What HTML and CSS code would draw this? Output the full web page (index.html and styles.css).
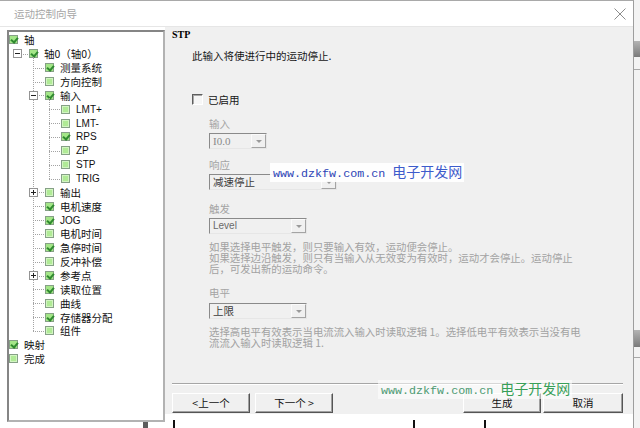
FILE: index.html
```html
<!DOCTYPE html>
<html lang="zh-CN">

<head>
    <meta charset="UTF-8">
    <meta name="viewport" content="width=device-width, initial-scale=1.0">
    <title>运动控制向导</title>
    <link rel="stylesheet" href="styles.css">
</head>

<body>
    <div class="screen">
        <div class="window">
            <div class="titlebar">
                <span class="title">运动控制向导</span>
                <svg class="close" width="12" height="12" viewBox="0 0 12 12">
                    <path d="M0.5 0.5L11.5 11.5M11.5 0.5L0.5 11.5" stroke="#8c8c8c" stroke-width="1" fill="none" />
                </svg>
            </div>

            <div class="main">
                <div class="nav">
                    <div class="tree">
                        <div class="row l0"><i class="cb on"></i><span>轴</span></div>
                        <div class="row l1"><span class="twist"><i class="exp"></i></span><i class="cb on"></i><span>轴0（轴0）</span></div>
                        <div class="group g2">
                            <div class="row l2"><span class="twist"></span><i class="cb on"></i><span>测量系统</span></div>
                            <div class="row l2"><span class="twist"></span><i class="cb"></i><span>方向控制</span></div>
                            <div class="row l2"><span class="twist"><i class="exp"></i></span><i class="cb on"></i><span>输入</span></div>
                            <div class="group g3">
                                <div class="row l3"><span class="twist"></span><i class="cb"></i><span class="lat">LMT+</span></div>
                                <div class="row l3"><span class="twist"></span><i class="cb"></i><span class="lat">LMT-</span></div>
                                <div class="row l3"><span class="twist"></span><i class="cb on"></i><span class="lat">RPS</span></div>
                                <div class="row l3"><span class="twist"></span><i class="cb"></i><span class="lat">ZP</span></div>
                                <div class="row l3"><span class="twist"></span><i class="cb"></i><span class="lat">STP</span></div>
                                <div class="row l3"><span class="twist"></span><i class="cb"></i><span class="lat">TRIG</span></div>
                            </div>
                            <div class="row l2"><span class="twist"><i class="exp plus"></i></span><i class="cb"></i><span>输出</span></div>
                            <div class="row l2"><span class="twist"></span><i class="cb on"></i><span>电机速度</span></div>
                            <div class="row l2"><span class="twist"></span><i class="cb on"></i><span class="lat">JOG</span></div>
                            <div class="row l2"><span class="twist"></span><i class="cb"></i><span>电机时间</span></div>
                            <div class="row l2"><span class="twist"></span><i class="cb on"></i><span>急停时间</span></div>
                            <div class="row l2"><span class="twist"></span><i class="cb"></i><span>反冲补偿</span></div>
                            <div class="row l2"><span class="twist"><i class="exp plus"></i></span><i class="cb on"></i><span>参考点</span></div>
                            <div class="row l2"><span class="twist"></span><i class="cb on"></i><span>读取位置</span></div>
                            <div class="row l2"><span class="twist"></span><i class="cb"></i><span>曲线</span></div>
                            <div class="row l2"><span class="twist"></span><i class="cb on"></i><span>存储器分配</span></div>
                            <div class="row l2"><span class="twist"></span><i class="cb"></i><span>组件</span></div>
                        </div>
                        <div class="row l0"><i class="cb on"></i><span>映射</span></div>
                        <div class="row l0"><i class="cb"></i><span>完成</span></div>
                    </div>
                    <div class="stub"></div>
                </div>

                <div class="side">
                    <div class="panel">
                        <div class="heading">STP</div>
                        <div class="intro">此输入将使进行中的运动停止.</div>

                        <div class="enable">
                            <i class="box"></i><span>已启用</span>
                        </div>

                        <div class="fields">
                            <div class="label gap-a">输入</div>
                            <div class="combo w-s"><span class="value serif">I0.0</span><span class="drop"></span></div>

                            <div class="label gap-b">响应</div>
                            <div class="combo w-l"><span class="value dark">减速停止</span><span class="drop"></span></div>

                            <div class="label gap-c">触发</div>
                            <div class="combo w-m"><span class="value lat">Level</span><span class="drop"></span></div>
                            <p class="desc">
                                如果选择电平触发，则只要输入有效，运动便会停止。<br>
                                如果选择边沿触发，则只有当输入从无效变为有效时，运动才会停止。运动停止<br>
                                后，可发出新的运动命令。
                            </p>

                            <div class="label gap-c">电平</div>
                            <div class="combo w-m gap-d"><span class="value dark">上限</span><span class="drop"></span></div>
                            <p class="desc">
                                选择高电平有效表示当电流流入输入时读取逻辑 1。选择低电平有效表示当没有电<br>
                                流流入输入时读取逻辑 1.
                            </p>
                        </div>

                        <div class="footer">
                            <div class="sep"></div>
                            <div class="buttons">
                                <button class="btn">&lt;上一个</button>
                                <button class="btn next">下一个 &gt;</button>
                                <span class="fill"></span>
                                <button class="btn">生成</button>
                                <button class="btn cancel">取消</button>
                            </div>
                        </div>

                        <!-- site watermarks burned into the capture -->
                        <div class="mark mark-blue"><span class="url">www.dzkfw.com.cn </span><span class="cn">电子开发网</span></div>
                        <div class="mark mark-green"><span class="url">www.dzkfw.com.cn </span><span class="cn">电子开发网</span></div>
                    </div>
                    <div class="under">
                        <i class="post p1"></i>
                        <i class="post p2"></i>
                        <i class="post p3"></i>
                    </div>
                </div>
            </div>
        </div>

        <div class="edge">
            <i class="bar b1"></i>
            <i class="rule r1"></i>
            <i class="bar b2"></i>
            <i class="rule r2"></i>
        </div>
    </div>
</body>

</html>
```

FILE: styles.css
```css
* {
    margin: 0;
    padding: 0;
    box-sizing: border-box;
}

body {
    width: 640px;
    height: 428px;
    overflow: hidden;
    background: #fff;
    font-family: "Noto Sans CJK SC", "Liberation Sans", sans-serif;
    font-size: 10.5px;
    color: #151515;
}

i {
    display: block;
}

.screen {
    display: flex;
    height: 428px;
}

.window {
    width: 634px;
    display: flex;
    flex-direction: column;
    border-top: 1px solid #a9a9a9;
    border-right: 1px solid #9e9e9e;
}

/* title bar */
.titlebar {
    height: 26px;
    flex: none;
    display: flex;
    align-items: center;
    justify-content: space-between;
    padding: 0 7px 0 14px;
    background: #fff;
    border-bottom: 1px solid #e6e6e6;
}

.title {
    color: #a6a6a6;
    line-height: 14px;
}

.main {
    flex: 1;
    display: flex;
}

/* tree */
.nav {
    width: 165px;
    flex: none;
}

.tree {
    width: 158px;
    height: 392px;
    margin: 3px 0 0 7px;
    padding-top: 1px;
    background: #fff;
    border: 2px solid;
    border-color: #858585 #b2b2b2 #b2b2b2 #858585;
}

.stub {
    width: 5px;
    height: 6px;
    margin-left: 143px;
    background: #5c5c5c;
}

.row {
    height: 13.87px;
    display: flex;
    align-items: center;
    white-space: nowrap;
    line-height: 13px;
    color: #111;
}

.l0 { padding-left: 0; }
.l1 { padding-left: 4px; }
.l2 { padding-left: 20px; }
.l3 { padding-left: 36px; }

.lat {
    font-family: "Liberation Sans", sans-serif;
    font-size: 10px;
}

.twist {
    position: relative;
    width: 16px;
    height: 100%;
    flex: none;
    display: flex;
    align-items: center;
}

.twist::after {
    content: "";
    position: absolute;
    left: 4px;
    right: 1px;
    top: 50%;
    border-top: 1px dotted #a3a3a3;
}

.exp {
    position: relative;
    z-index: 1;
    width: 9px;
    height: 9px;
    background: #fff;
    border: 1px solid #949494;
}

.exp::before {
    content: "";
    position: absolute;
    left: 1px;
    right: 1px;
    top: 3px;
    height: 1px;
    background: #222;
}

.exp.plus::after {
    content: "";
    position: absolute;
    top: 1px;
    bottom: 1px;
    left: 3px;
    width: 1px;
    background: #222;
}

.cb {
    position: relative;
    width: 9px;
    height: 9px;
    flex: none;
    margin-right: 6px;
    border: 1px solid #86a086;
    background: #b0ea96;
    box-shadow: inset 0 0 0 1px #d2f5c2;
}

.cb.on {
    background: #a4e688;
    box-shadow: none;
}

.cb.on::after {
    content: "";
    position: absolute;
    left: 2px;
    top: 0;
    width: 3px;
    height: 5px;
    border: solid #2f8a2f;
    border-width: 0 2px 2px 0;
    transform: rotate(40deg);
}

.group {
    position: relative;
}

.group::before {
    content: "";
    position: absolute;
    top: -4px;
    bottom: 6.9px;
    border-left: 1px dotted #a3a3a3;
}

.g2::before { left: 24px; }
.g3::before { left: 40px; }

/* right side */
.side {
    flex: 1;
    display: flex;
    flex-direction: column;
}

.panel {
    position: relative;
    height: 387px;
    flex: none;
    display: flex;
    flex-direction: column;
    background: #f0f0f0;
}

.heading {
    margin: 1px 0 0 7px;
    font-family: "Liberation Serif", serif;
    font-weight: bold;
    font-size: 10px;
    line-height: 14px;
    color: #000;
}

.intro {
    margin-top: 7px;
    padding-left: 27px;
    line-height: 14px;
}

.enable {
    margin-top: 29px;
    padding-left: 27px;
    height: 14px;
    display: flex;
    align-items: center;
}

.box {
    width: 11px;
    height: 11px;
    margin-right: 5px;
    background: #f6f6f6;
    border: 1px solid;
    border-color: #5e5e5e #fff #fff #5e5e5e;
    box-shadow: inset 1px 1px #a8a8a8;
}

.fields {
    padding-left: 44px;
}

.label {
    line-height: 14px;
    color: #a4a4a4;
}

.gap-a { margin-top: 11px; }
.gap-b { margin-top: 9px; }
.gap-c { margin-top: 12px; }

.combo {
    height: 16px;
    margin-top: 2px;
    display: flex;
    background: #f0f0f0;
    border: 1px solid;
    border-color: #8a8a8a #e6e6e6 #e6e6e6 #8a8a8a;
}

.combo.gap-d {
    margin-top: 3px;
}

.w-s { width: 58px; }
.w-m { width: 98px; }
.w-l { width: 128px; }

.value {
    flex: 1;
    padding-left: 3px;
    line-height: 14px;
    color: #6a6a6a;
    white-space: nowrap;
}

.value.serif {
    font-family: "Liberation Serif", serif;
    font-size: 11px;
    color: #8a8a8a;
}

.value.dark {
    color: #3c3c3c;
}

.drop {
    width: 15px;
    display: flex;
    align-items: center;
    justify-content: center;
    border: 1px solid;
    border-color: #fbfbfb #a4a4a4 #a4a4a4 #fbfbfb;
}

.drop::before {
    content: "";
    border-left: 3px solid transparent;
    border-right: 3px solid transparent;
    border-top: 3px solid #9a9a9a;
}

.desc {
    margin-top: 7px;
    font-size: 10.4px;
    line-height: 11px;
    color: #a2a2a2;
    white-space: nowrap;
}

.footer {
    margin-top: auto;
    padding: 0 10px 1px 7px;
}

.sep {
    height: 2px;
    margin-bottom: 8px;
    border-top: 1px solid #a6a6a6;
    border-bottom: 1px solid #fff;
}

.buttons {
    display: flex;
}

.btn {
    width: 78px;
    height: 20px;
    font-family: inherit;
    font-size: 10.5px;
    line-height: 16px;
    color: #111;
    background: #f0f0f0;
    border: 1px solid;
    border-color: #fff #555 #555 #fff;
    box-shadow: inset -1px -1px #a0a0a0;
}

.btn.next {
    margin-left: 5px;
}

.btn.cancel {
    width: 80px;
    margin-left: 2px;
}

.fill {
    flex: 1;
}

.mark {
    position: absolute;
    white-space: nowrap;
    line-height: 16px;
    padding: 0 2px 0 3px;
}

.mark .url {
    font-family: "Liberation Mono", monospace;
    font-size: 11.7px;
}

.mark .cn {
    font-size: 14px;
}

.mark-blue {
    left: 105px;
    top: 136px;
    background: rgba(255, 255, 255, 0.92);
    color: #2c44b6;
}

.mark-blue .cn {
    color: #3d5ccc;
}

.mark-green {
    left: 213px;
    top: 353px;
    background: rgba(255, 255, 255, 0.55);
    color: #4c9a72;
}

.mark-green .cn {
    color: #38a058;
}

/* whatever shows under and beside the dialog */
.under {
    flex: 1;
    display: flex;
    align-items: flex-end;
}

.post {
    width: 2px;
    height: 8px;
    background: #111;
}

.p1 { margin-left: 8px; }
.p2 { margin-left: 238px; }
.p3 { margin-left: 69px; }

.edge {
    width: 6px;
    flex: none;
    display: flex;
    flex-direction: column;
    background: #f3f3f3;
}

.bar {
    height: 16px;
    background: linear-gradient(#b4b4b4, #7a7a7a);
}

.b1 { margin-top: 41px; }
.b2 { margin-top: 260px; height: 17px; }

.rule {
    height: 1px;
    background: #a8a8a8;
}

.r1 { margin-top: 12px; }
.r2 { margin-top: 10px; }
```
